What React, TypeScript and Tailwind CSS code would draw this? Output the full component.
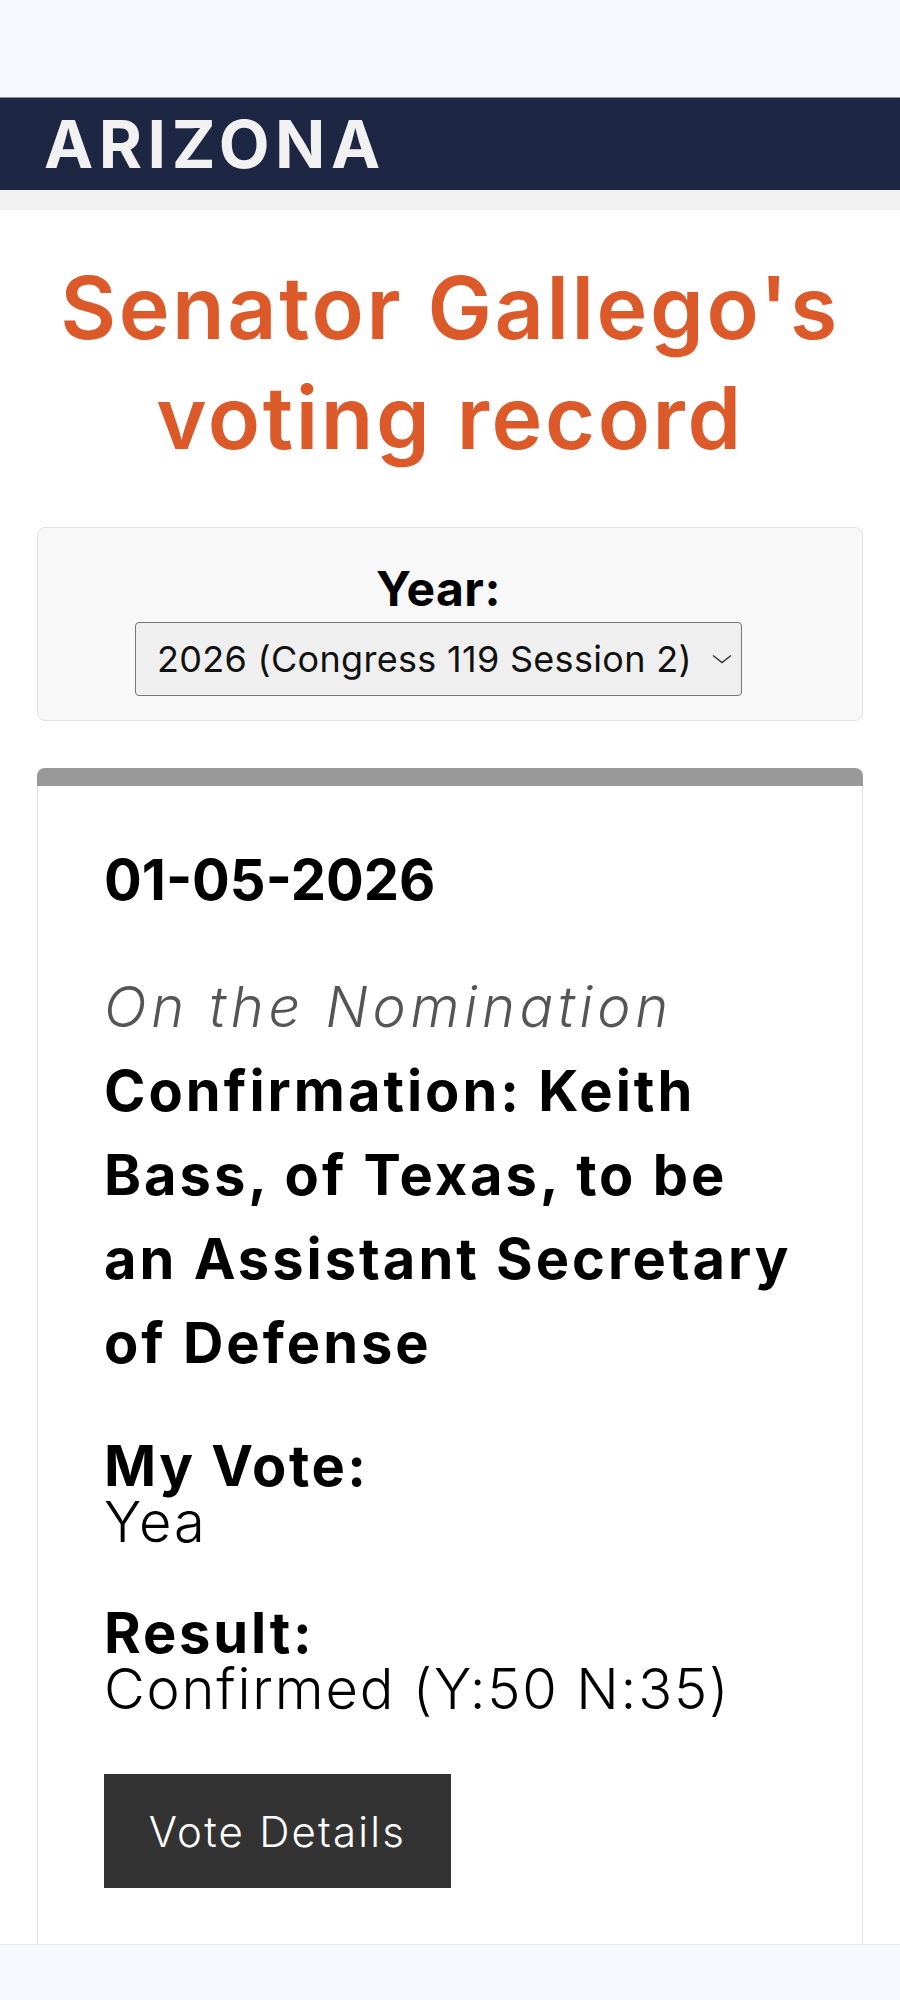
export default function App() {
  return (
    <div className="min-h-[2000px] bg-[#f5f8fd] font-['Inter','Liberation_Sans',sans-serif] text-black">
      <div className="h-[97px]" />
      <header className="h-[93px] bg-[#1d2642] border-t border-[#8a90a0] flex items-center px-[44px]">
        <span className="text-[66px] font-bold text-[#f1f1f1] leading-none tracking-[5.5px]">ARIZONA</span>
      </header>
      <div className="h-[20px] bg-[#f1f1f1]" />
      <main className="bg-white px-[37px] pt-[43px]">
        <h1 className="text-center text-[86px] leading-[110px] font-semibold text-[#dc5a2a] tracking-[2.6px]">
          Senator Gallego's
          <br />
          voting record
        </h1>
        <div className="mt-[54px] h-[194px] rounded-[8px] border border-[#e3e3e3] bg-[#f8f8f8] flex flex-col items-center pt-[37px]">
          <div className="flex flex-col items-center mr-[23px]">
            <label className="block text-[48px] leading-[48px] font-bold tracking-[0.5px]">Year:</label>
            <div className="relative mt-[9px]">
              <select
                className="appearance-none w-[607px] h-[74px] rounded-[4px] border border-[#767676] bg-[#efefef] pl-[21px] pr-[36px] text-[36px] text-[#111] tracking-[0.3px] font-['Inter','Liberation_Sans',sans-serif]"
                defaultValue="2026"
              >
                <option value="2026">2026 (Congress 119 Session 2)</option>
                <option value="2025">2025 (Congress 119 Session 1)</option>
              </select>
              <svg
                className="absolute right-[10px] top-[32px] pointer-events-none"
                width="20"
                height="10"
                viewBox="0 0 20 10"
                fill="none"
              >
                <path d="M1 1.5 L10 8.5 L19 1.5" stroke="#333" strokeWidth="1.4" />
              </svg>
            </div>
          </div>
        </div>
        <div className="mt-[47px] rounded-t-[8px] border-x border-[#e2e2e2] bg-white">
          <div className="h-[18px] rounded-t-[8px] bg-[#999999] -mx-px" />
          <div className="px-[66px] pt-[52px] pb-[56px]">
            <h3 className="text-[56px] leading-[84px] font-bold">01-05-2026</h3>
            <p className="mt-[43px] text-[56px] leading-[84px] italic font-light text-[#555555] tracking-[4.7px]">
              On the Nomination
            </p>
            <p className="text-[56px] leading-[84px] font-bold tracking-[3px]">
              Confirmation: Keith
              <br />
              Bass, of Texas, to be
              <br />
              an Assistant Secretary
              <br />
              of Defense
            </p>
            <div className="mt-[53px] text-[56px] leading-[56px]">
              <div className="font-bold tracking-[2.5px]">My Vote:</div>
              <div className="font-light tracking-[2px]">Yea</div>
            </div>
            <div className="mt-[55px] text-[56px] leading-[56px]">
              <div className="font-bold tracking-[2.8px]">Result:</div>
              <div className="font-light tracking-[1.8px]">Confirmed (Y:50 N:35)</div>
            </div>
            <button className="mt-[57px] w-[347px] h-[114px] bg-[#333333] text-white text-[42px] font-light tracking-[2.2px]">
              Vote Details
            </button>
          </div>
        </div>
      </main>
      <footer className="h-[57px] border-t border-[#e5e7eb] bg-[#f5f8fd]" />
    </div>
  );
}
